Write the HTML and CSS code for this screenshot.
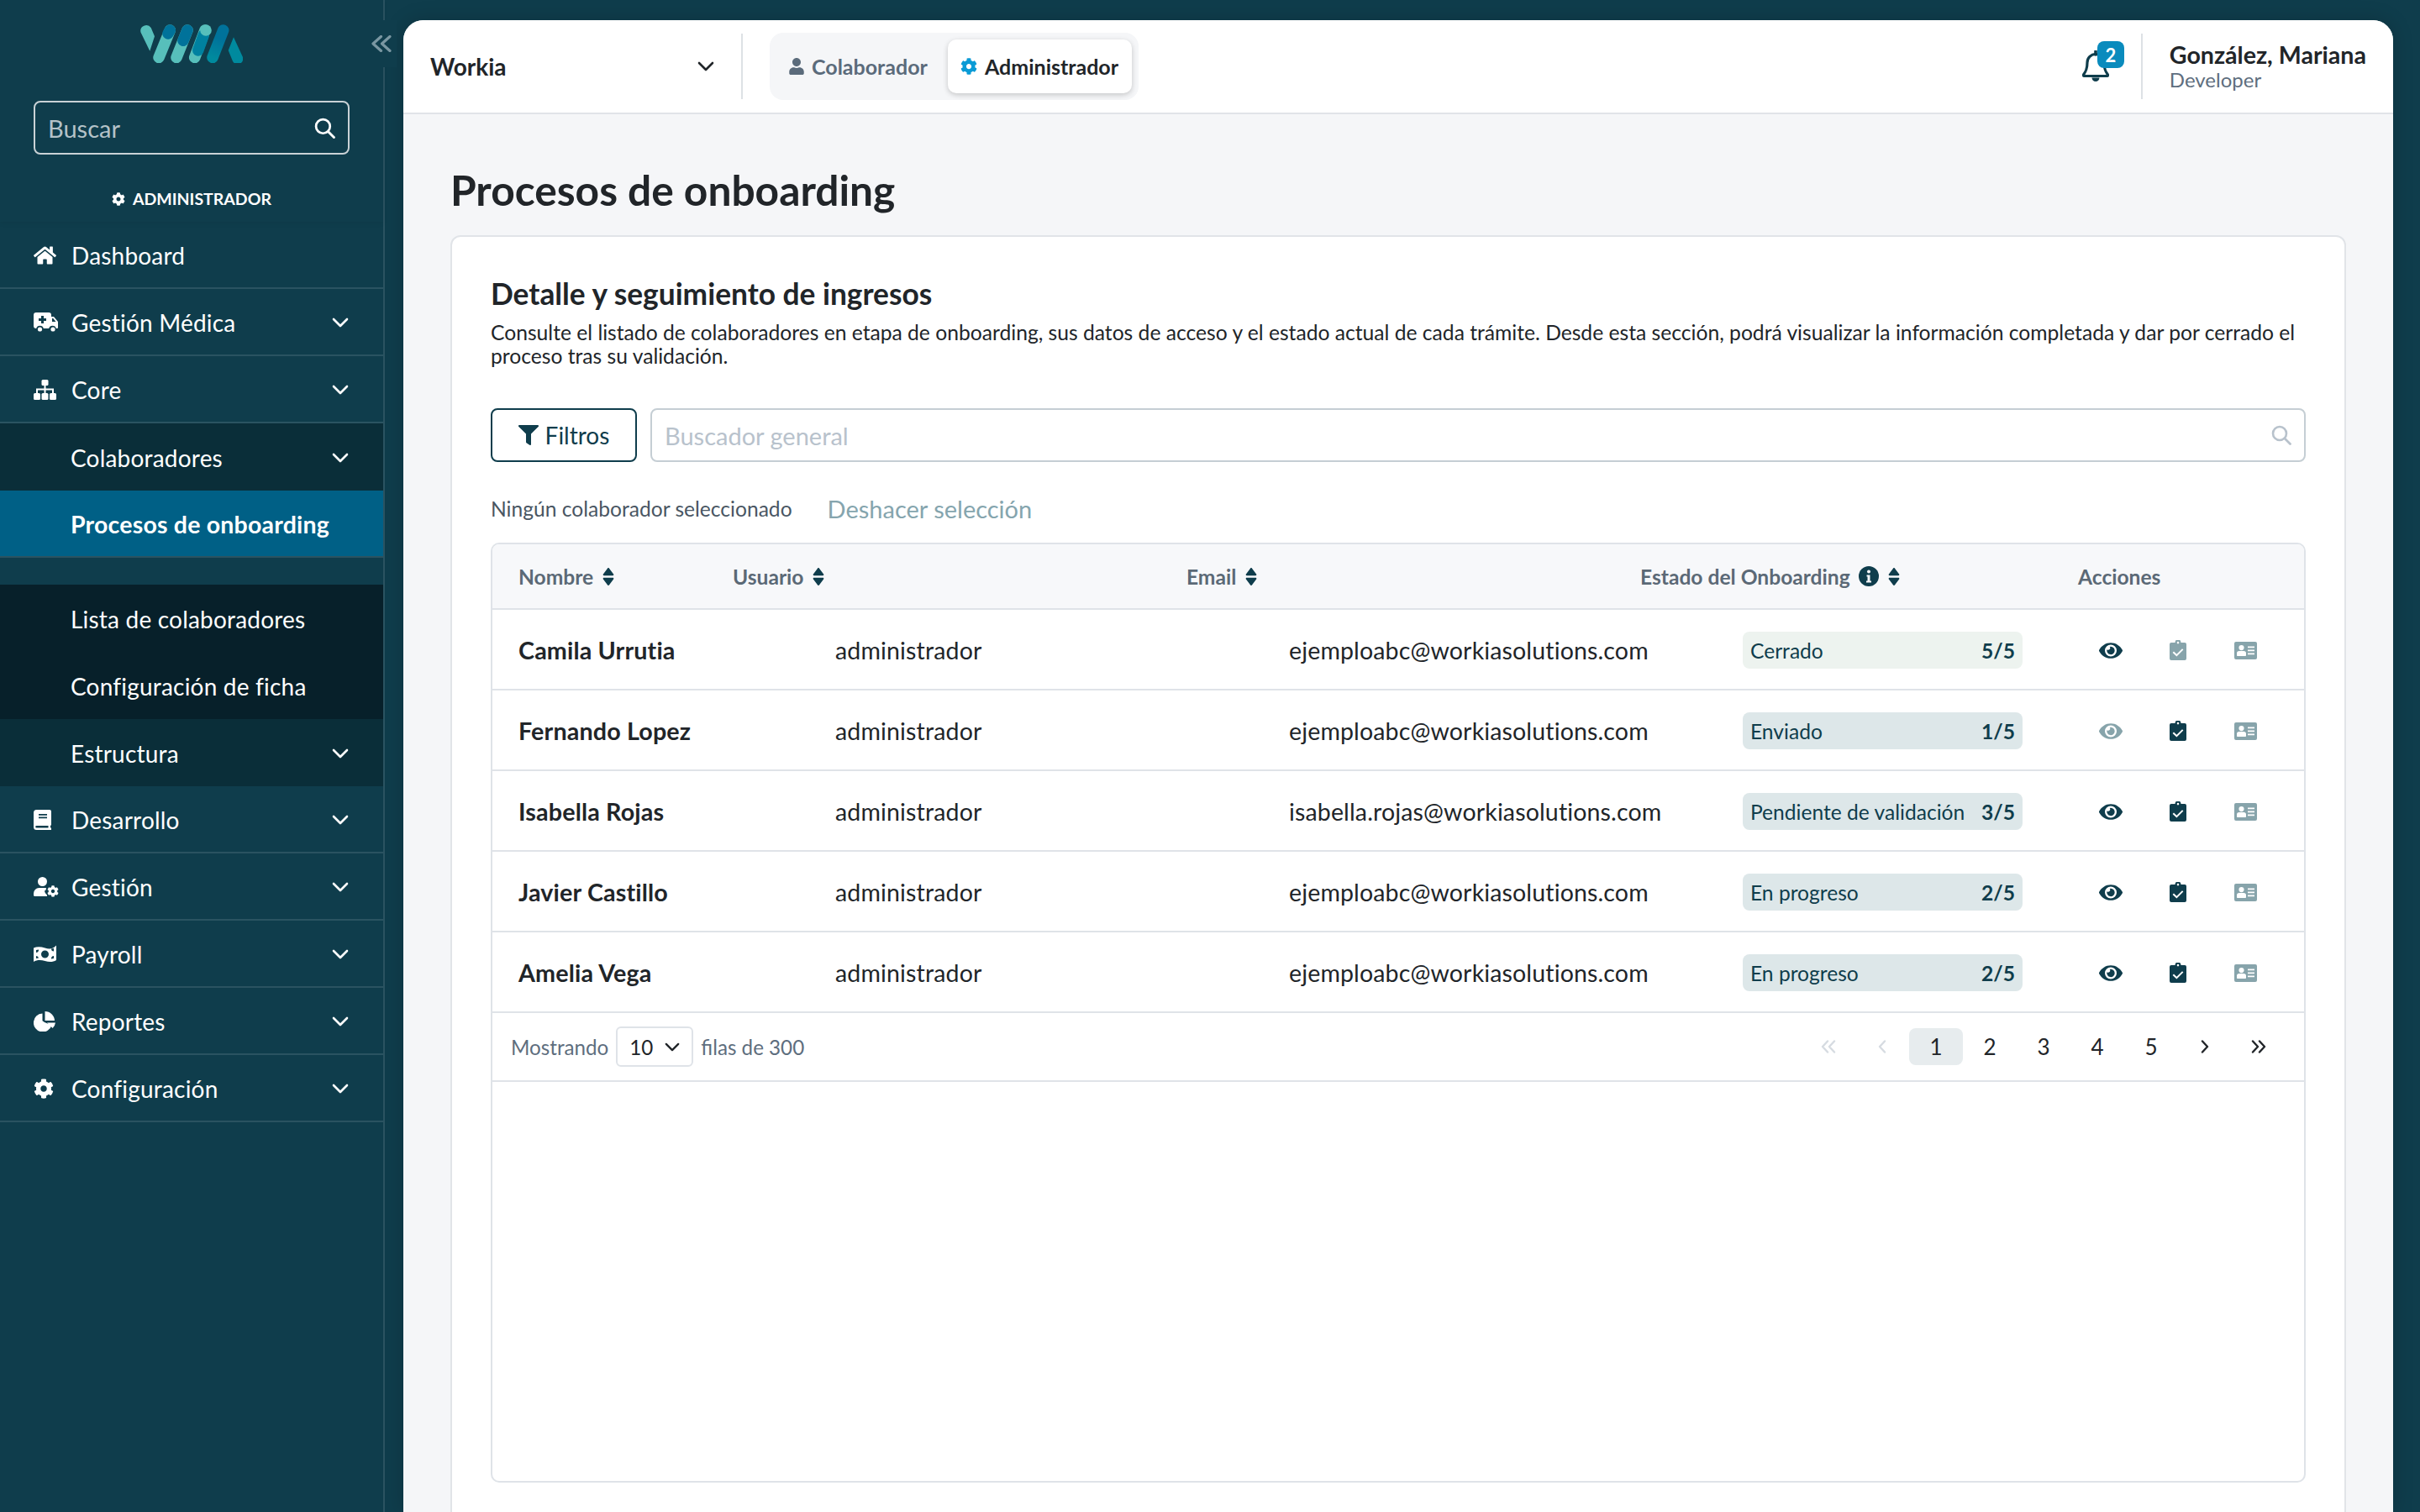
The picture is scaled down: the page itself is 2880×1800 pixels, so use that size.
FILE: index.html
```html
<!DOCTYPE html>
<html lang="es">
<head>
<meta charset="UTF-8">
<title>Procesos de onboarding</title>
<link rel="stylesheet" href="styles.css">
</head>
<body>

<svg class="sprite" xmlns="http://www.w3.org/2000/svg">
  <symbol id="i-home" viewBox="0 0 576 512"><path d="M280.37 148.26L96 300.11V464a16 16 0 0 0 16 16l112.06-.29a16 16 0 0 0 15.92-16V368a16 16 0 0 1 16-16h64a16 16 0 0 1 16 16v95.64a16 16 0 0 0 16 16.05L464 480a16 16 0 0 0 16-16V300L295.67 148.26a12.19 12.19 0 0 0-15.3 0zM571.6 251.47L488 182.56V44.05a12 12 0 0 0-12-12h-56a12 12 0 0 0-12 12v72.61L318.47 43a48 48 0 0 0-61 0L4.34 251.47a12 12 0 0 0-1.6 16.9l25.5 31A12 12 0 0 0 45.15 301l235.22-193.74a12.19 12.19 0 0 1 15.3 0L530.9 301a12 12 0 0 0 16.9-1.6l25.5-31a12 12 0 0 0-1.7-16.93z"/></symbol>
  <symbol id="i-cog" viewBox="0 0 512 512"><path d="M487.4 315.7l-42.6-24.6c4.3-23.2 4.3-47 0-70.2l42.6-24.6c4.9-2.8 7.1-8.6 5.5-14-11.1-35.6-30-67.8-54.7-94.6-3.8-4.1-10-5.1-14.8-2.3L380.8 110c-17.9-15.4-38.5-27.3-60.8-35.1V25.8c0-5.6-3.9-10.5-9.4-11.7-36.7-8.2-74.3-7.8-109.2 0-5.5 1.2-9.4 6.1-9.4 11.7V75c-22.2 7.9-42.8 19.8-60.8 35.1L88.7 85.5c-4.9-2.8-11-1.9-14.8 2.3-24.7 26.7-43.6 58.9-54.7 94.6-1.7 5.4.6 11.2 5.5 14L67.3 221c-4.3 23.2-4.3 47 0 70.2l-42.6 24.6c-4.9 2.8-7.1 8.6-5.5 14 11.1 35.6 30 67.8 54.7 94.6 3.8 4.1 10 5.1 14.8 2.3l42.6-24.6c17.9 15.4 38.5 27.3 60.8 35.1v49.2c0 5.6 3.9 10.5 9.4 11.7 36.7 8.2 74.3 7.8 109.2 0 5.5-1.2 9.4-6.1 9.4-11.7v-49.2c22.2-7.9 42.8-19.8 60.8-35.1l42.6 24.6c4.9 2.8 11 1.9 14.8-2.3 24.7-26.7 43.6-58.9 54.7-94.6 1.5-5.5-.7-11.3-5.6-14.1zM256 336c-44.1 0-80-35.9-80-80s35.9-80 80-80 80 35.9 80 80-35.9 80-80 80z"/></symbol>
  <symbol id="i-user" viewBox="0 0 448 512"><path d="M224 256c70.7 0 128-57.3 128-128S294.7 0 224 0 96 57.3 96 128s57.3 128 128 128zm89.6 32h-16.7c-22.2 10.2-46.9 16-72.9 16s-50.6-5.8-72.9-16h-16.7C60.2 288 0 348.2 0 422.4V464c0 26.5 21.5 48 48 48h352c26.5 0 48-21.5 48-48v-41.6c0-74.2-60.2-134.4-134.4-134.4z"/></symbol>
  <symbol id="i-ambulance" viewBox="0 0 30 24"><path d="M3 0h15a3 3 0 0 1 3 3v2h3l5 6v7a1 1 0 0 1-1 1h-1.200a4.500 4.500 0 0 0-8.600 0h-6.400a4.500 4.500 0 0 0-8.600 0H3a3 3 0 0 1-3-3V3a3 3 0 0 1 3-3zM9 4v3H6v3h3v3h3v-3h3V7h-3V4zM22 7v4h4.500l-3.300-4z" fill-rule="evenodd"/><circle cx="7.500" cy="20" r="2.600"/><circle cx="23" cy="20" r="2.600"/></symbol>
  <symbol id="i-sitemap" viewBox="0 0 27 24"><rect x="9.500" y="0" width="8" height="7" rx="1.500"/><rect x="0" y="16" width="8" height="8" rx="1.500"/><rect x="9.500" y="16" width="8" height="8" rx="1.500"/><rect x="19" y="16" width="8" height="8" rx="1.500"/><path d="M12.500 7h2v3.500H24V16h-2v-3.500h-7.500V16h-2v-3.500H5V16H3v-5.500h9.500z"/></symbol>
  <symbol id="i-book" viewBox="0 0 21 24"><path d="M3.500 0H19a2 2 0 0 1 2 2v15.500c0 .8-.4 1.300-1 1.600v2.400h.5a.8.800 0 0 1 0 2.500H3.500A3.500 3.500 0 0 1 0 20.500v-17A3.500 3.500 0 0 1 3.500 0zM6 5v1.800h10V5zM6 8.500v1.800h10V8.500zM3.500 19a1.300 1.300 0 0 0 0 2.600h14V19z" fill-rule="evenodd"/></symbol>
  <symbol id="i-usercog" viewBox="0 0 30 24"><circle cx="10.500" cy="5.500" r="5.500"/><path d="M6.500 13h2.800a7 7 0 0 0 2.400 0h2.700l.6.100c-.3.800-.3 1.200-.1 2.200l-1.300.8c-.4.300-.6.800-.4 1.300.4 1.200 1 2.300 1.900 3.200l.8.800.1 1.600H1.500A1.500 1.500 0 0 1 0 22v-2.500A6.500 6.500 0 0 1 6.500 13z"/><use href="#i-cog" x="16" y="10" width="14" height="14"/></symbol>
  <symbol id="i-money" viewBox="0 0 27 22"><path d="M0 3.500C4 1.800 8.500 2 13.500 3.500S23 5 27 .5V18c-4 2.500-8.500 2.500-13.500 1S4 17.500 0 20zM13.500 6.500a4.500 4.500 0 1 0 0 9 4.500 4.500 0 0 0 0-9zM3 6v3a3 3 0 0 0 3-3.500zM24 13a3 3 0 0 0-3 3.500l3-.5zM3 13v3l3-.5A3 3 0 0 0 3 13zM21 4.500A3 3 0 0 0 24 7.500V4z" fill-rule="evenodd"/></symbol>
  <symbol id="i-pie" viewBox="0 0 26 24"><path d="M10.500 2.500A11 11 0 1 0 21.500 16.500L13 13l-2.500-1.800z"/><path d="M13.500 0A11.500 11.500 0 0 1 25 11H13.500z"/><path d="M16 13.500h10a11 11 0 0 1-3.400 6.500z"/></symbol>
  <symbol id="i-eye" viewBox="0 0 576 512"><path d="M572.52 241.4C518.29 135.59 410.93 64 288 64S57.68 135.64 3.48 241.41a32.35 32.35 0 0 0 0 29.19C57.71 376.41 165.07 448 288 448s230.32-71.64 284.52-177.41a32.35 32.35 0 0 0 0-29.19zM288 400a144 144 0 1 1 144-144 143.93 143.93 0 0 1-144 144zm0-240a95.31 95.31 0 0 0-25.31 3.79 47.85 47.85 0 0 1-66.9 66.9A95.78 95.78 0 1 0 288 160z"/></symbol>
  <symbol id="i-clip" viewBox="0 0 20 24"><path d="M2 3h4.500a3.500 3.500 0 0 1 7 0H18a2 2 0 0 1 2 2v17a2 2 0 0 1-2 2H2a2 2 0 0 1-2-2V5a2 2 0 0 1 2-2zM10 1.800a1.300 1.300 0 1 0 0 2.600 1.300 1.300 0 0 0 0-2.600zM15 10.200l-6.600 6.500-3.400-3.300-1.400 1.500 4.800 4.700 8-8z" fill-rule="evenodd"/></symbol>
  <symbol id="i-card" viewBox="0 0 27 21"><path d="M2 0h23a2 2 0 0 1 2 2v17a2 2 0 0 1-2 2H2a2 2 0 0 1-2-2V2a2 2 0 0 1 2-2zM8.500 4a3.100 3.100 0 1 0 0 6.200 3.100 3.100 0 0 0 0-6.200zM5.800 11A2.800 2.800 0 0 0 3 13.800V16c0 .6.400 1 1 1h9c.6 0 1-.4 1-1v-2.200a2.800 2.800 0 0 0-2.800-2.800zM16 5.500v1.800h8V5.500zM16 9.500v1.800h8V9.500zM16 13.500v1.800h8v-1.800z" fill-rule="evenodd"/></symbol>
  <symbol id="i-filter" viewBox="0 0 512 512"><path d="M487.976 0H24.028C2.71 0-8.047 25.866 7.058 40.971L192 225.941V432c0 7.831 3.821 15.17 10.237 20.662l80 56C298.02 519.708 320 508.451 320 488.66V225.941l184.947-184.97C520.021 25.896 509.338 0 487.976 0z"/></symbol>
  <symbol id="i-search" viewBox="0 0 24 24"><circle cx="10" cy="10" r="8" fill="none" stroke="currentColor" stroke-width="2.600"/><path d="M16 16l6.500 6.500" fill="none" stroke="currentColor" stroke-width="2.800" stroke-linecap="round"/></symbol>
  <symbol id="i-chev" viewBox="0 0 20 12"><path d="M2 2l8 8 8-8" fill="none" stroke="currentColor" stroke-width="2.600" stroke-linecap="round" stroke-linejoin="round"/></symbol>
  <symbol id="i-sort" viewBox="0 0 16 24"><path d="M8 0c.4 0 .8.200 1 .500l6 8c.6.800.1 2-1 2H2c-1.100 0-1.600-1.200-1-2l6-8c.2-.300.600-.500 1-.500zM2 13.500h12c1.100 0 1.600 1.200 1 2l-6 8c-.5.700-1.500.700-2 0l-6-8c-.6-.800-.1-2 1-2z"/></symbol>
  <symbol id="i-info" viewBox="0 0 24 24"><circle cx="12" cy="12" r="12"/><circle cx="12" cy="6.500" r="2" fill="#f7f8fa"/><path d="M9.500 10.500h4v7h1.500v2H9v-2h1.500v-5h-1z" fill="#f7f8fa"/></symbol>
  <symbol id="i-prev" viewBox="0 0 10 16"><path d="M8 1.500L2 8l6 6.500" fill="none" stroke="currentColor" stroke-width="2.400" stroke-linecap="round" stroke-linejoin="round"/></symbol>
  <symbol id="i-next" viewBox="0 0 10 16"><path d="M2 1.500L8 8l-6 6.500" fill="none" stroke="currentColor" stroke-width="2.400" stroke-linecap="round" stroke-linejoin="round"/></symbol>
  <symbol id="i-first" viewBox="0 0 18 16"><path d="M8 1.500L2 8l6 6.500M16 1.500L10 8l6 6.500" fill="none" stroke="currentColor" stroke-width="2.400" stroke-linecap="round" stroke-linejoin="round"/></symbol>
  <symbol id="i-last" viewBox="0 0 18 16"><path d="M2 1.500L8 8l-6 6.500M10 1.500L16 8l-6 6.500" fill="none" stroke="currentColor" stroke-width="2.400" stroke-linecap="round" stroke-linejoin="round"/></symbol>
  <linearGradient id="logo-blue" gradientUnits="userSpaceOnUse" x1="98" y1="7" x2="86" y2="40"><stop offset="0.3" stop-color="#00729a"/><stop offset="1" stop-color="#008a9e"/></linearGradient>
</svg>

<aside class="sidebar">
  <button class="collapse-btn" aria-label="Colapsar">
    <svg viewBox="0 0 24 20" width="24" height="20"><path d="M11.500 1.500L2 10l9.500 8.500M22 1.500L12.500 10l9.500 8.500" fill="none" stroke="currentColor" stroke-width="3.200" stroke-linecap="round" stroke-linejoin="round"/></svg>
  </button>

  <div class="sidebar-top">
    <svg class="logo" viewBox="0 0 122 46" width="122" height="46">
      <path d="M.5 9.500L11.300 31.700 17 14.300 12.700 4A6.800 6.800 0 0 0 .5 9.500z" fill="#57bfbb"/>
      <path d="M35.300 7L22 39.500" stroke="#57bfbb" stroke-width="13.500" stroke-linecap="round"/>
      <path d="M35.300 7L33 11" stroke="#00729a" stroke-width="13.500" stroke-linecap="round"/>
      <path d="M56 7L43 39.500" stroke="#57bfbb" stroke-width="13.500" stroke-linecap="round"/>
      <path d="M56 7L51 19.300" stroke="#00729a" stroke-width="13.500" stroke-linecap="round"/>
      <path d="M77 7L64.700 39.500" stroke="#57bfbb" stroke-width="13.500" stroke-linecap="round"/>
      <path d="M75.300 12.700L68.700 31" stroke="#0081a0" stroke-width="13.500" stroke-linecap="round"/>
      <circle cx="78" cy="7" r="6.800" fill="#57bfbb"/>
      <path d="M98.700 7L86 39.500" stroke="url(#logo-blue)" stroke-width="13.500" stroke-linecap="round"/>
      <path d="M111 15.300L121.500 38A5.500 5.500 0 0 1 110 44L104.700 31z" fill="#008a9e"/>
    </svg>
    <div class="side-search">
      <span>Buscar</span>
      <svg class="ico" width="25" height="25"><use href="#i-search"/></svg>
    </div>
    <div class="role-label">
      <svg class="ico" width="16" height="16"><use href="#i-cog"/></svg>
      <span>ADMINISTRADOR</span>
    </div>
  </div>

  <nav class="nav">
    <a class="nav-item">
      <svg class="ico" width="27" height="24"><use href="#i-home"/></svg>
      <span>Dashboard</span>
    </a>
    <a class="nav-item">
      <svg class="ico" width="30" height="24"><use href="#i-ambulance"/></svg>
      <span>Gestión Médica</span>
      <svg class="ico" width="20" height="12"><use href="#i-chev"/></svg>
    </a>
    <a class="nav-item">
      <svg class="ico" width="27" height="24"><use href="#i-sitemap"/></svg>
      <span>Core</span>
      <svg class="ico" width="20" height="12"><use href="#i-chev"/></svg>
    </a>
    <a class="nav-item sub">
      <span>Colaboradores</span>
      <svg class="ico" width="20" height="12"><use href="#i-chev"/></svg>
    </a>
    <a class="nav-item active"><span>Procesos de onboarding</span></a>
    <div class="nav-gap"></div>
    <a class="nav-item subsub"><span>Lista de colaboradores</span></a>
    <a class="nav-item subsub"><span>Configuración de ficha</span></a>
    <a class="nav-item sub">
      <span>Estructura</span>
      <svg class="ico" width="20" height="12"><use href="#i-chev"/></svg>
    </a>
    <a class="nav-item">
      <svg class="ico" width="21" height="24"><use href="#i-book"/></svg>
      <span>Desarrollo</span>
      <svg class="ico" width="20" height="12"><use href="#i-chev"/></svg>
    </a>
    <a class="nav-item">
      <svg class="ico" width="30" height="24"><use href="#i-usercog"/></svg>
      <span>Gestión</span>
      <svg class="ico" width="20" height="12"><use href="#i-chev"/></svg>
    </a>
    <a class="nav-item">
      <svg class="ico" width="27" height="22"><use href="#i-money"/></svg>
      <span>Payroll</span>
      <svg class="ico" width="20" height="12"><use href="#i-chev"/></svg>
    </a>
    <a class="nav-item">
      <svg class="ico" width="26" height="24"><use href="#i-pie"/></svg>
      <span>Reportes</span>
      <svg class="ico" width="20" height="12"><use href="#i-chev"/></svg>
    </a>
    <a class="nav-item">
      <svg class="ico" width="24" height="24"><use href="#i-cog"/></svg>
      <span>Configuración</span>
      <svg class="ico" width="20" height="12"><use href="#i-chev"/></svg>
    </a>
  </nav>
</aside>

<div class="panel">
  <header class="topbar">
    <div class="company">
      <span>Workia</span>
      <svg class="ico" width="20" height="12"><use href="#i-chev"/></svg>
    </div>
    <div class="role-tabs">
      <div class="role-tab">
        <svg class="ico" width="18" height="20"><use href="#i-user"/></svg>
        <span>Colaborador</span>
      </div>
      <div class="role-tab on">
        <svg class="ico" width="20" height="20"><use href="#i-cog"/></svg>
        <span>Administrador</span>
      </div>
    </div>
    <div class="topbar-right">
      <div class="bell">
        <svg viewBox="0 0 32 38" width="32" height="38"><path d="M16 4.500a10 10 0 0 0-10 10c0 8-2 11-4.500 14.500a1 1 0 0 0 .8 1.500h27.400a1 1 0 0 0 .8-1.500C28 25.500 26 22.500 26 14.500a10 10 0 0 0-10-10z" fill="none" stroke="currentColor" stroke-width="3.200" stroke-linejoin="round"/><path d="M16 1v4" stroke="currentColor" stroke-width="3.600" stroke-linecap="round"/><path d="M11.500 32.500h9a4.500 4.500 0 0 1-9 0z" fill="currentColor"/></svg>
        <span class="badge">2</span>
      </div>
      <div class="user">
        <strong>González, Mariana</strong>
        <span>Developer</span>
      </div>
    </div>
  </header>

  <main class="content">
    <h1>Procesos de onboarding</h1>

    <section class="card">
      <h2>Detalle y seguimiento de ingresos</h2>
      <p class="intro">Consulte el listado de colaboradores en etapa de onboarding, sus datos de acceso y el estado actual de cada trámite. Desde esta sección, podrá visualizar la información completada y dar por cerrado el proceso tras su validación.</p>

      <div class="toolbar">
        <button class="filter-btn">
          <svg class="ico" width="24" height="24"><use href="#i-filter"/></svg>
          Filtros
        </button>
        <div class="general-search">
          <span>Buscador general</span>
          <svg class="ico" width="24" height="24"><use href="#i-search"/></svg>
        </div>
      </div>

      <div class="selection">
        <span class="sel-none">Ningún colaborador seleccionado</span>
        <span class="sel-undo">Deshacer selección</span>
      </div>

      <div class="table">
        <div class="thead">
          <div class="th">Nombre <svg class="ico" width="16" height="21"><use href="#i-sort"/></svg></div>
          <div class="th">Usuario <svg class="ico" width="16" height="21"><use href="#i-sort"/></svg></div>
          <div class="th">Email <svg class="ico" width="16" height="21"><use href="#i-sort"/></svg></div>
          <div class="th">Estado del Onboarding
            <svg class="ico" width="24" height="24"><use href="#i-info"/></svg>
            <svg class="ico" width="16" height="21"><use href="#i-sort"/></svg>
          </div>
          <div class="th">Acciones</div>
        </div>

        <div class="tr">
          <div class="name">Camila Urrutia</div>
          <div>administrador</div>
          <div>ejemploabc@workiasolutions.com</div>
          <div class="chip closed"><span>Cerrado</span><b>5/5</b></div>
          <div class="actions">
            <svg class="ico act" width="28" height="25"><use href="#i-eye"/></svg>
            <svg class="ico act off" width="20" height="24"><use href="#i-clip"/></svg>
            <svg class="ico act off" width="27" height="21"><use href="#i-card"/></svg>
          </div>
        </div>
        <div class="tr">
          <div class="name">Fernando Lopez</div>
          <div>administrador</div>
          <div>ejemploabc@workiasolutions.com</div>
          <div class="chip"><span>Enviado</span><b>1/5</b></div>
          <div class="actions">
            <svg class="ico act off" width="28" height="25"><use href="#i-eye"/></svg>
            <svg class="ico act" width="20" height="24"><use href="#i-clip"/></svg>
            <svg class="ico act off" width="27" height="21"><use href="#i-card"/></svg>
          </div>
        </div>
        <div class="tr">
          <div class="name">Isabella Rojas</div>
          <div>administrador</div>
          <div>isabella.rojas@workiasolutions.com</div>
          <div class="chip"><span>Pendiente de validación</span><b>3/5</b></div>
          <div class="actions">
            <svg class="ico act" width="28" height="25"><use href="#i-eye"/></svg>
            <svg class="ico act" width="20" height="24"><use href="#i-clip"/></svg>
            <svg class="ico act off" width="27" height="21"><use href="#i-card"/></svg>
          </div>
        </div>
        <div class="tr">
          <div class="name">Javier Castillo</div>
          <div>administrador</div>
          <div>ejemploabc@workiasolutions.com</div>
          <div class="chip"><span>En progreso</span><b>2/5</b></div>
          <div class="actions">
            <svg class="ico act" width="28" height="25"><use href="#i-eye"/></svg>
            <svg class="ico act" width="20" height="24"><use href="#i-clip"/></svg>
            <svg class="ico act off" width="27" height="21"><use href="#i-card"/></svg>
          </div>
        </div>
        <div class="tr">
          <div class="name">Amelia Vega</div>
          <div>administrador</div>
          <div>ejemploabc@workiasolutions.com</div>
          <div class="chip"><span>En progreso</span><b>2/5</b></div>
          <div class="actions">
            <svg class="ico act" width="28" height="25"><use href="#i-eye"/></svg>
            <svg class="ico act" width="20" height="24"><use href="#i-clip"/></svg>
            <svg class="ico act off" width="27" height="21"><use href="#i-card"/></svg>
          </div>
        </div>

        <div class="tfoot">
          <div class="rows-info">
            <span>Mostrando</span>
            <div class="rows-select">10 <svg class="ico" width="18" height="11"><use href="#i-chev"/></svg></div>
            <span>filas de 300</span>
          </div>
          <div class="pager">
            <span class="pg dis"><svg width="18" height="16"><use href="#i-first"/></svg></span>
            <span class="pg dis"><svg width="10" height="16"><use href="#i-prev"/></svg></span>
            <span class="pg cur">1</span>
            <span class="pg">2</span>
            <span class="pg">3</span>
            <span class="pg">4</span>
            <span class="pg">5</span>
            <span class="pg"><svg width="10" height="16"><use href="#i-next"/></svg></span>
            <span class="pg"><svg width="18" height="16"><use href="#i-last"/></svg></span>
          </div>
        </div>
      </div>
    </section>
  </main>
</div>

</body>
</html>
```

FILE: styles.css
```css
* {
    box-sizing: border-box;
}

body {
    margin: 0;
    height: 100vh;
    display: flex;
    overflow: hidden;
    font-family: "Lato", "Liberation Sans", sans-serif;
    color: #212529;
    background: #0f3d4c;
}

.sprite {
    position: absolute;
    width: 0;
    height: 0;
}

.ico {
    fill: currentColor;
    flex: none;
}

/* Sidebar */
.sidebar {
    position: relative;
    width: 458px;
    flex: none;
    border-right: 2px solid #2a5361;
    color: #fff;
}

.collapse-btn {
    position: absolute;
    top: 24px;
    left: 436px;
    width: 36px;
    height: 56px;
    display: flex;
    align-items: center;
    justify-content: center;
    padding: 0;
    border: none;
    background: #0f3d4c;
    color: #7a97a2;
}

.sidebar-top {
    height: 264px;
    padding-top: 29px;
    display: flex;
    flex-direction: column;
    align-items: center;
    box-shadow: 0 2px 6px rgba(0,0,0,0.06);
}

.side-search {
    width: 376px;
    height: 64px;
    margin-top: 45px;
    padding: 0 15px;
    display: flex;
    align-items: center;
    justify-content: space-between;
    border: 2px solid #c9d2d6;
    border-radius: 8px;
    font-size: 29px;
    color: #b4c2c8;
}

.side-search .ico {
    color: #fff;
}

.role-label {
    margin-top: 41px;
    display: flex;
    align-items: center;
    gap: 9px;
    font-size: 19.5px;
    font-weight: 700;
}

.nav-item {
    height: 80px;
    padding: 2px 41px 0 40px;
    display: grid;
    grid-template-columns: 45px 1fr auto;
    align-items: center;
    font-size: 28px;
    letter-spacing: 0.2px;
    border-bottom: 2px solid #2a5361;
}

.nav-item.sub,
.nav-item.active,
.nav-item.subsub {
    padding-left: 84px;
    grid-template-columns: 1fr auto;
}

.nav-item.sub {
    background: #0a2e39;
    border-bottom: none;
}

.nav-item.active {
    background: #006086;
    font-size: 28.5px;
    font-weight: 700;
}

.nav-gap {
    height: 32px;
}

.nav-item.subsub {
    background: #07202a;
    border-bottom: none;
}

/* Main panel */
.panel {
    flex: 1;
    margin: 24px 32px 0 22px;
    display: flex;
    flex-direction: column;
    background: #f5f6f8;
    border-radius: 24px 24px 0 0;
    overflow: hidden;
    box-shadow: 0 0 24px rgba(0,0,0,0.18);
}

.topbar {
    height: 112px;
    flex: none;
    display: flex;
    align-items: center;
    background: #fff;
    border-bottom: 2px solid #e1e4e8;
}

.company {
    width: 404px;
    height: 78px;
    padding: 0 32px;
    display: flex;
    align-items: center;
    justify-content: space-between;
    border-right: 2px solid #dde1e5;
    font-size: 28px;
    font-weight: 700;
}

.role-tabs {
    margin-left: 32px;
    height: 80px;
    width: 439px;
    padding: 8px;
    display: flex;
    justify-content: space-between;
    background: #f5f6f8;
    border-radius: 16px;
}

.role-tab {
    height: 64px;
    padding: 0 15px;
    display: flex;
    align-items: center;
    gap: 9px;
    font-size: 25px;
    font-weight: 700;
    color: #5b6b7b;
}

.role-tab.on {
    width: 219px;
    background: #fff;
    color: #212529;
    border-radius: 10px;
    box-shadow: 0 2px 6px rgba(0,0,0,0.2);
}

.role-tab.on .ico {
    color: #0a9bd6;
}

.topbar-right {
    margin-left: auto;
    display: flex;
    align-items: center;
}

.bell {
    position: relative;
    width: 70px;
    height: 78px;
    display: flex;
    align-items: center;
    color: #0f3d4c;
}

.badge {
    position: absolute;
    top: 9px;
    left: 18px;
    width: 32px;
    height: 32px;
    display: flex;
    align-items: center;
    justify-content: center;
    background: #0a8bbd;
    border-radius: 8px;
    color: #fff;
    font-size: 22px;
    font-weight: 700;
}

.user {
    height: 78px;
    padding: 2px 32px 0;
    display: flex;
    flex-direction: column;
    justify-content: center;
    border-left: 2px solid #dde1e5;
    line-height: 30px;
}

.user strong {
    font-size: 28.6px;
}

.user span {
    font-size: 24px;
    color: #5e6e7e;
}

.content {
    padding: 52px 56px 0;
}

h1 {
    margin: 0;
    font-size: 49.7px;
    line-height: 76px;
    font-weight: 700;
}

.card {
    margin-top: 16px;
    height: 1700px;
    padding: 46px;
    background: #fff;
    border: 2px solid #e1e4e8;
    border-radius: 12px;
}

h2 {
    margin: 0;
    font-size: 35.3px;
    line-height: 44px;
    font-weight: 700;
}

.intro {
    margin: 10px 0 0;
    font-size: 24.65px;
    line-height: 28px;
}

.toolbar {
    margin-top: 48px;
    display: flex;
    gap: 16px;
}

.filter-btn {
    width: 174px;
    height: 64px;
    display: flex;
    align-items: center;
    justify-content: center;
    gap: 8px;
    padding: 0;
    background: #fff;
    border: 2px solid #0f3d4c;
    border-radius: 8px;
    color: #0f3d4c;
    font-family: inherit;
    font-size: 28px;
}

.general-search {
    flex: 1;
    height: 64px;
    padding: 0 15px;
    display: flex;
    align-items: center;
    justify-content: space-between;
    border: 2px solid #c5ced4;
    border-radius: 8px;
    font-size: 29px;
    color: #b8c2cc;
}

.selection {
    margin-top: 35px;
    height: 40px;
    display: flex;
    align-items: center;
    gap: 42px;
}

.sel-none {
    font-size: 24.6px;
    color: #495663;
}

.sel-undo {
    font-size: 29px;
    color: #85a5ae;
}

.table {
    margin-top: 21px;
    height: 1119px;
    background: #fff;
    border: 2px solid #dfe3e8;
    border-radius: 10px;
    overflow: hidden;
}

.thead {
    height: 78px;
    padding-left: 31px;
    display: grid;
    grid-template-columns: 255px 540px 540px 521px 1fr;
    align-items: center;
    background: #f7f8fa;
    border-bottom: 2px solid #dfe3e8;
}

.th {
    display: flex;
    align-items: center;
    gap: 10px;
    font-size: 24.6px;
    font-weight: 700;
    color: #5b6976;
}

.th .ico {
    color: #0f3d4c;
}

.tr {
    height: 96px;
    padding-left: 31px;
    padding-top: 2px;
    display: grid;
    grid-template-columns: 377px 540px 540px 398px 240px;
    align-items: center;
    border-bottom: 2px solid #dfe3e8;
    font-size: 28.5px;
    letter-spacing: 0.15px;
}

.name {
    font-size: 28.7px;
    font-weight: 700;
}

.chip {
    width: 333px;
    height: 44px;
    padding: 0 9px;
    display: flex;
    align-items: center;
    justify-content: space-between;
    background: #dde7e9;
    border-radius: 8px;
    color: #0f3d4c;
    font-size: 24.6px;
    letter-spacing: 0;
}

.chip.closed {
    background: #edf3ef;
}

.actions {
    display: grid;
    grid-template-columns: repeat(3, 80px);
    justify-items: center;
    align-items: center;
}

.act {
    color: #0f3d4c;
}

.act.off {
    color: #87a4ab;
}

.tfoot {
    height: 82px;
    padding: 0 22px;
    display: flex;
    align-items: center;
    justify-content: space-between;
    border-bottom: 2px solid #dfe3e8;
    font-size: 24.2px;
    color: #5e6e7e;
}

.rows-info {
    display: flex;
    align-items: center;
    gap: 9px;
}

.rows-select {
    width: 92px;
    height: 48px;
    padding: 0 14px;
    display: flex;
    align-items: center;
    justify-content: space-between;
    border: 2px solid #dfe3e8;
    border-radius: 6px;
    color: #212529;
}

.pager {
    display: flex;
    font-size: 26px;
}

.pg {
    width: 64px;
    height: 44px;
    display: flex;
    align-items: center;
    justify-content: center;
    color: #212529;
    border-radius: 8px;
}

.pg.cur {
    background: #e7ecee;
}

.pg.dis {
    color: #d6dbe1;
}
```
